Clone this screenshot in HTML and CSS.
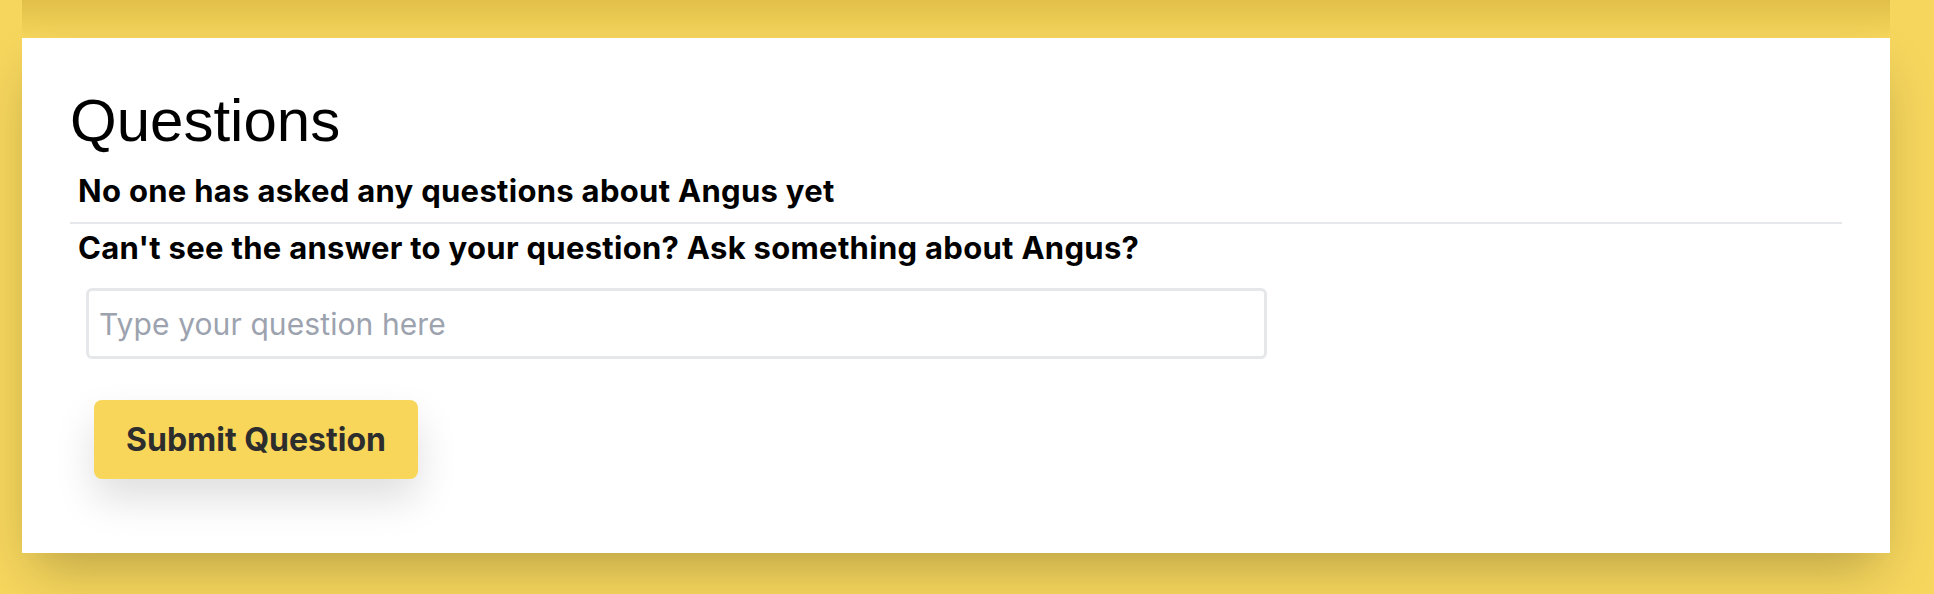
FILE: index.html
```
<!DOCTYPE html>
<html lang="en">
<head>
<meta charset="utf-8">
<title>Questions</title>
<link rel="stylesheet" href="styles.css">
</head>
<body>
  <main class="card">
    <h1 class="title">Questions</h1>
    <p class="notice">No one has asked any questions about Angus yet</p>
    <hr class="divider">
    <form class="ask">
      <p class="prompt">Can't see the answer to your question? Ask something about Angus?</p>
      <input class="ask-input" type="text" placeholder="Type your question here">
      <button class="ask-btn" type="button">Submit Question</button>
    </form>
  </main>
</body>
</html>
```
FILE: styles.css
```
html, body {
  height: 100%;
}

body {
  margin: 0;
  padding: 38px 44px 0 22px;
  box-sizing: border-box;
  background:
    linear-gradient(to bottom, rgba(150, 110, 0, 0.22), rgba(150, 110, 0, 0) 38px) 22px 0 / 1868px 38px no-repeat,
    #f6d65d;
  font-family: Inter, "Noto Sans", sans-serif;
  color: #000;
  overflow: hidden;
}

.card {
  background: #fff;
  padding: 48px 48px 74px;
  box-shadow: 0 25px 50px -12px rgba(0, 0, 0, 0.25);
  display: flex;
  flex-direction: column;
  align-items: flex-start;
}

.title {
  margin: 0;
  font: 400 60px/70px "Liberation Sans", Arial, sans-serif;
  color: #000;
}

.notice,
.prompt {
  margin: 0 0 0 8px;
  font: 700 31px/36px Inter, sans-serif;
  letter-spacing: 0.3px;
  color: #000;
}

.notice {
  margin-top: 17px;
}

.divider {
  align-self: stretch;
  border: 0;
  height: 2px;
  background: #e5e7eb;
  margin: 13px 0 0;
}

.ask {
  display: flex;
  flex-direction: column;
  align-items: flex-start;
  align-self: stretch;
}

.prompt {
  margin-top: 6px;
}

.ask-input {
  margin: 22px 0 0 16px;
  width: 1181px;
  height: 71px;
  box-sizing: border-box;
  border: 3px solid #e5e7eb;
  border-radius: 6px;
  padding: 0 10px;
  font: 400 30px Inter, sans-serif;
  letter-spacing: 0.1px;
  color: #111;
  outline: none;
  background: #fff;
}

.ask-input::placeholder {
  color: #9ca3af;
}

.ask-btn {
  margin: 41px 0 0 24px;
  width: 324px;
  height: 79px;
  border: 0;
  border-radius: 8px;
  background: #f8d65a;
  color: #2d2d2d;
  font: 700 32px Inter, sans-serif;
  box-shadow: 0 20px 40px rgba(0, 0, 0, 0.13);
  cursor: pointer;
}
```
